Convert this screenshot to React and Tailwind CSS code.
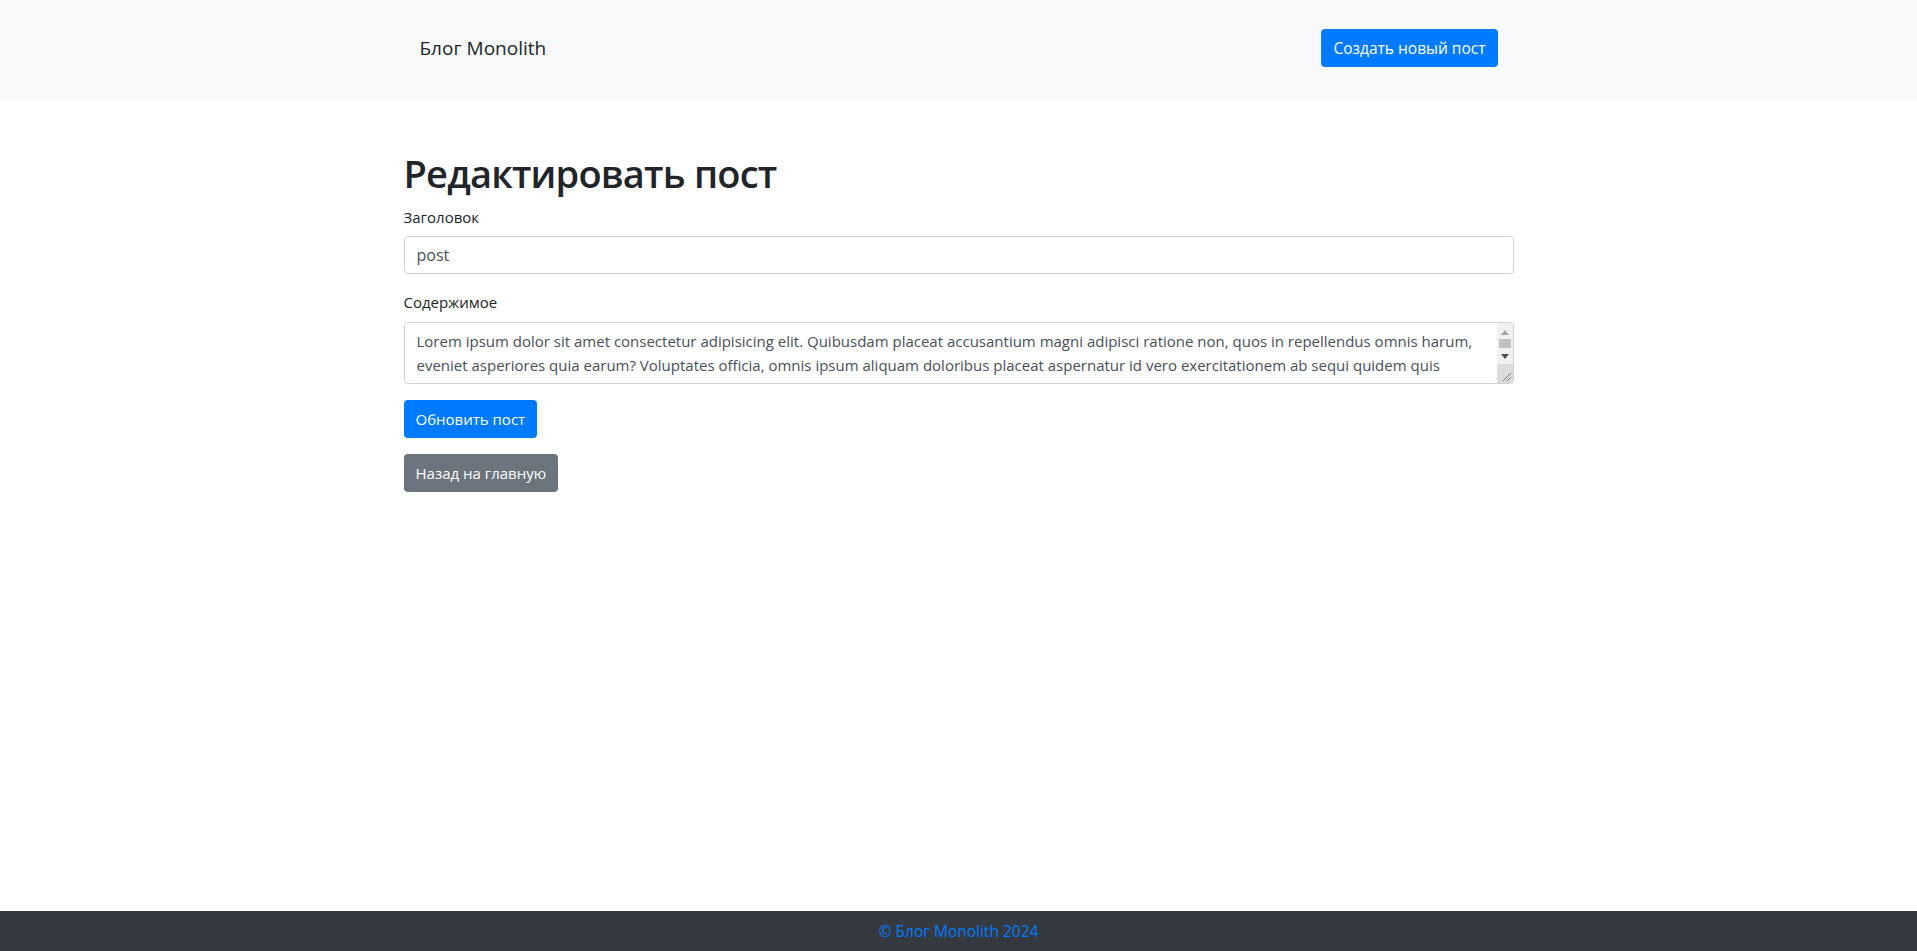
import { useState } from 'react';

const LOREM =
  'Lorem ipsum dolor sit amet consectetur adipisicing elit. Quibusdam placeat accusantium magni adipisci ratione non, quos in repellendus omnis harum, eveniet asperiores quia earum? Voluptates officia, omnis ipsum aliquam doloribus placeat aspernatur id vero exercitationem ab sequi quidem quis nostrum, dolorem quae. Similique, dolores. Ipsam, quaerat! Lorem ipsum dolor sit amet consectetur adipisicing elit. Quibusdam placeat accusantium magni adipisci ratione non, quos in repellendus omnis harum, eveniet asperiores quia earum? Voluptates officia, omnis ipsum aliquam doloribus placeat aspernatur id vero exercitationem ab sequi quidem quis nostrum, dolorem quae.';

// Windows-like scrollbar drawn over the textarea (headless hides native ones)
function FakeScrollbar() {
  return (
    <div className="absolute top-px right-px bottom-px w-[16px] flex flex-col rounded-r-[3px] overflow-hidden pointer-events-none">
      <div className="flex-1 bg-[#f1f1f1] flex flex-col items-center pt-[7px]">
        <svg width="8" height="5" viewBox="0 0 8 5"><path d="M4 0 L8 5 L0 5 Z" fill="#a3a3a3" /></svg>
        <div className="mt-[4px] w-[12px] h-[9px] bg-[#c1c1c1]" />
        <svg className="mt-[6px]" width="8" height="5" viewBox="0 0 8 5"><path d="M0 0 L8 0 L4 5 Z" fill="#505050" /></svg>
      </div>
      <div className="h-[19px] bg-[#dcdcdc] flex items-end justify-end p-[2px]">
        <svg width="9" height="9" viewBox="0 0 9 9">
          <path d="M9 1 L1 9 M9 5 L5 9" stroke="#7a7a7a" strokeWidth="1" />
        </svg>
      </div>
    </div>
  );
}

function App() {
  const [title, setTitle] = useState('post');
  const [content, setContent] = useState(LOREM);

  return (
    <div className="min-h-screen flex flex-col bg-white text-[#212529] font-['Open_Sans',sans-serif] text-base leading-6">
      {/* Header */}
      <header className="bg-[#f8f9fa] h-[100px]">
        <div className="w-[1140px] mx-auto px-[15px] h-full">
          <nav className="flex items-center justify-between h-full px-4">
            <a href="#" className="text-[19px] leading-[30px] text-[#212529] -mt-[4px]">Блог Monolith</a>
            <a
              href="#"
              className="h-[38px] px-3 flex items-center rounded bg-[#007bff] text-white text-[15.5px] -mt-[4px]"
            >
              Создать новый пост
            </a>
          </nav>
        </div>
      </header>

      {/* Main */}
      <main className="flex-1">
        <div className="w-[1140px] mx-auto px-[15px] pt-[49px]">
          <h1 className="text-[38px] leading-[48px] font-semibold tracking-[-0.8px] mb-2">Редактировать пост</h1>
          <form onSubmit={(e) => e.preventDefault()}>
            <div className="mb-4">
              <label className="block mb-[7px] text-[15px]">Заголовок</label>
              <input
                type="text"
                value={title}
                onChange={(e) => setTitle(e.target.value)}
                className="block w-full h-[38px] px-3 border border-[#ced4da] rounded text-[#495057] text-base focus:outline-none"
              />
            </div>
            <div className="mb-4">
              <label className="block mb-2 text-[15px]">Содержимое</label>
              <div className="relative">
                <textarea
                  rows={2}
                  value={content}
                  onChange={(e) => setContent(e.target.value)}
                  className="block w-full pl-3 pr-[26px] py-[6px] border border-[#ced4da] rounded text-[#495057] text-[15px] leading-6 focus:outline-none"
                />
                <FakeScrollbar />
              </div>
            </div>
            <button type="submit" className="h-[38px] px-3 rounded bg-[#007bff] text-white text-[15px]">
              Обновить пост
            </button>
          </form>
          <a href="#" className="inline-flex items-center mt-4 h-[38px] px-3 rounded bg-[#6c757d] text-white text-[15px]">
            Назад на главную
          </a>
        </div>
      </main>

      {/* Footer */}
      <footer className="bg-[#343a40] h-[40px] flex items-center justify-center">
        <span className="text-[#007bff] text-[15.5px]">© Блог Monolith 2024</span>
      </footer>
    </div>
  );
}

export default App;
